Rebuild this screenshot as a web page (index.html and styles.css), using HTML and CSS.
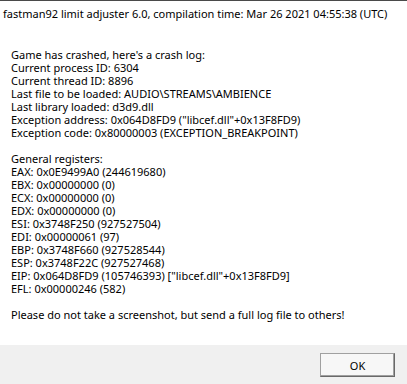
FILE: index.html
```html
<!DOCTYPE html>
<html lang="en">
<head>
    <meta charset="UTF-8">
    <title>fastman92 limit adjuster 6.0</title>
    <link rel="stylesheet" href="styles.css">
</head>
<body>
    <div class="dialog">
        <div class="caption">fastman92 limit adjuster 6.0, compilation time: Mar 26 2021 04:55:38 (UTC)</div>
        <div class="content">
            <div class="log">
                <div>Game has crashed, here's a crash log:</div>
                <div>Current process ID: 6304</div>
                <div>Current thread ID: 8896</div>
                <div>Last file to be loaded: AUDIO\STREAMS\AMBIENCE</div>
                <div>Last library loaded: d3d9.dll</div>
                <div>Exception address: 0x064D8FD9 ("libcef.dll"+0x13F8FD9)</div>
                <div>Exception code: 0x80000003 (EXCEPTION_BREAKPOINT)</div>
                <div class="blank"></div>
                <div>General registers:</div>
                <div>EAX: 0x0E9499A0 (244619680)</div>
                <div>EBX: 0x00000000 (0)</div>
                <div>ECX: 0x00000000 (0)</div>
                <div>EDX: 0x00000000 (0)</div>
                <div>ESI: 0x3748F250 (927527504)</div>
                <div>EDI: 0x00000061 (97)</div>
                <div>EBP: 0x3748F660 (927528544)</div>
                <div>ESP: 0x3748F22C (927527468)</div>
                <div>EIP: 0x064D8FD9 (105746393) ["libcef.dll"+0x13F8FD9]</div>
                <div>EFL: 0x00000246 (582)</div>
                <div class="blank"></div>
                <div>Please do not take a screenshot, but send a full log file to others!</div>
            </div>
        </div>
        <div class="footer">
            <button class="ok-button">OK</button>
        </div>
    </div>
</body>
</html>
```

FILE: styles.css
```css
html, body {
    margin: 0;
    padding: 0;
}
body {
    font-family: 'Noto Sans', 'Open Sans', sans-serif;
    font-size: 11px;
    color: #000;
    background: #fff;
}
.dialog {
    width: 407px;
    height: 384px;
    display: flex;
    flex-direction: column;
    border-top: 1px solid #4a4a4a;
    box-sizing: border-box;
}
.caption {
    padding: 5px 0 0 3px;
    height: 20px;
    line-height: 15px;
    white-space: nowrap;
}
.content {
    flex: 1;
    padding: 22px 0 0 11px;
}
.log div {
    height: 13px;
    line-height: 13px;
    white-space: nowrap;
}
.footer {
    height: 39px;
    background: #f0f0f0;
    display: flex;
    justify-content: flex-end;
    align-items: flex-start;
    padding: 8px 12px 0 0;
    box-sizing: border-box;
}
.ok-button {
    width: 75px;
    height: 24px;
    font-family: inherit;
    font-size: 11px;
    background: #f7f7f7;
    border: 1px solid;
    border-color: #a0a0a0 #696969 #696969 #a0a0a0;
    box-shadow: inset -1px -1px 0 #a0a0a0;
    padding: 0;
    color: #000;
}
```
